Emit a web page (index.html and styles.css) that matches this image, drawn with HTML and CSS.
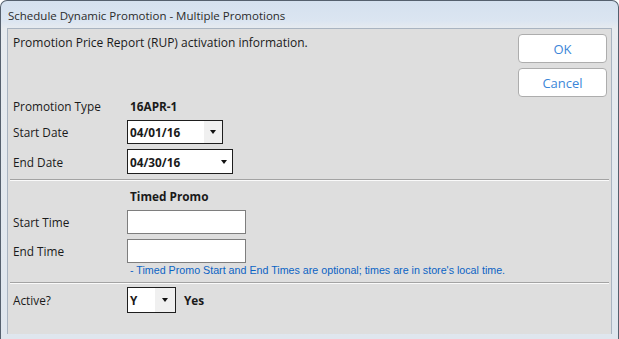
FILE: index.html
```html
<!DOCTYPE html>
<html>
<head>
<meta charset="utf-8">
<link rel="stylesheet" href="styles.css">
</head>
<body>
<div class="window">
  <div class="titlebar">Schedule Dynamic Promotion - Multiple Promotions</div>
  <div class="client">
    <div class="top">
      <div class="form-top">
        <div class="intro">Promotion Price Report (RUP) activation information.</div>
        <div class="row row-type">
          <span class="label">Promotion Type</span>
          <span class="value bold">16APR-1</span>
        </div>
        <div class="row row-start">
          <span class="label">Start Date</span>
          <div class="select sel-start"><span class="sel-text">04/01/16</span><span class="sel-btn"><span class="arrow"></span></span></div>
        </div>
        <div class="row row-end">
          <span class="label">End Date</span>
          <div class="select sel-end"><span class="sel-text">04/30/16</span><span class="sel-btn plain"><span class="arrow"></span></span></div>
        </div>
      </div>
      <div class="buttons">
        <button class="btn">OK</button>
        <button class="btn">Cancel</button>
      </div>
    </div>
    <div class="sep"></div>
    <div class="timed">
      <div class="row row-head">
        <span class="label"></span>
        <span class="value bold">Timed Promo</span>
      </div>
      <div class="row row-time1">
        <span class="label">Start Time</span>
        <div class="input"></div>
      </div>
      <div class="row row-time2">
        <span class="label">End Time</span>
        <div class="input"></div>
      </div>
      <div class="note">- Timed Promo Start and End Times are optional; times are in store's local time.</div>
    </div>
    <div class="sep sep2"></div>
    <div class="row row-active">
      <span class="label">Active?</span>
      <div class="select sel-active"><span class="sel-text">Y</span><span class="sel-btn"><span class="arrow"></span></span></div>
      <span class="yes bold">Yes</span>
    </div>
  </div>
</div>
</body>
</html>
```

FILE: styles.css
```css
html, body {
  margin: 0;
  padding: 0;
  background: #ffffff;
}
body {
  width: 619px;
  height: 339px;
  overflow: hidden;
  font-family: "Open Sans", "Noto Sans", sans-serif;
  font-size: 11.8px;
  color: #1a1a1a;
}
.window {
  box-sizing: border-box;
  width: 619px;
  height: 339px;
  border: 1px solid #55606e;
  border-bottom: none;
  border-radius: 7px 7px 0 0;
  background: linear-gradient(to bottom, #d5e1ef 0px, #dbe5f1 20px, #e7ebef 28px, #dfe6ee 100%);
  padding: 0 6px 5px 6px;
  display: flex;
  flex-direction: column;
}
.titlebar {
  height: 27px;
  line-height: 30px;
  padding-left: 1px;
  font-size: 11.5px;
  color: #2b2b2b;
  flex: none;
}
.client {
  flex: 1;
  background: #dedede;
  border: 1px solid #a9b4c1;
  border-bottom: none;
  padding: 0 0 0 5px;
  display: flex;
  flex-direction: column;
}
.top {
  display: flex;
  justify-content: space-between;
  height: 150px;
}
.form-top {
  display: flex;
  flex-direction: column;
}
.intro {
  margin-top: 5px;
  height: 18px;
  line-height: 18px;
  font-size: 12px;
}
.row {
  display: flex;
  align-items: center;
}
.label {
  width: 114px;
  flex: none;
}
.bold {
  font-weight: 700;
}
.value {
  padding-left: 3px;
}
.row-type {
  margin-top: 45px;
  height: 18px;
}
.row-start {
  margin-top: 5px;
  height: 24px;
}
.row-end {
  margin-top: 5px;
  height: 25px;
}
.select {
  box-sizing: border-box;
  height: 100%;
  border: 1px solid #1e1e1e;
  background: #ffffff;
  display: flex;
  align-items: center;
  font-weight: 700;
}
.sel-text {
  flex: 1;
  padding-left: 2px;
}
.sel-btn {
  height: 100%;
  width: 18px;
  background: #f0f0f0;
  display: flex;
  align-items: center;
  justify-content: center;
}
.sel-btn.plain {
  background: #ffffff;
}
.arrow {
  width: 0;
  height: 0;
  border-left: 3.5px solid transparent;
  border-right: 3.5px solid transparent;
  border-top: 4px solid #111;
}
.sel-start { width: 96px; }
.sel-end { width: 106px; }
.sel-end .sel-btn { width: 16px; }
.buttons {
  display: flex;
  flex-direction: column;
  gap: 5px;
  padding-top: 5px;
  padding-right: 4px;
}
.btn {
  box-sizing: border-box;
  width: 89px;
  height: 29px;
  background: #ffffff;
  border: 1px solid #adadad;
  border-radius: 4px;
  font-family: "Open Sans", "Noto Sans", sans-serif;
  font-size: 13px;
  color: #3b86d8;
  padding: 0;
}
.sep {
  margin: 0 2px 0 -3px;
  height: 0;
  border-top: 1px solid #a3a3a3;
  border-bottom: 1px solid #fafafa;
}
.timed {
  display: flex;
  flex-direction: column;
  height: 101px;
}
.row-head {
  margin-top: 6px;
  height: 18px;
}
.row-time1 {
  margin-top: 5px;
  height: 24px;
}
.row-time2 {
  margin-top: 5px;
  height: 24px;
}
.input {
  box-sizing: border-box;
  width: 119px;
  height: 100%;
  background: #ffffff;
  border: 1px solid #7e7e7e;
}
.note {
  padding-left: 117px;
  height: 12px;
  line-height: 12px;
  font-family: "Liberation Sans", Arial, sans-serif;
  font-size: 10.7px;
  color: #0b63c4;
  margin-top: 1px;
}
.row-active {
  margin-top: 3px;
  height: 26px;
}
.sel-active { width: 49px; }
.sel-active .sel-btn { width: 20px; }
.yes {
  padding-left: 8px;
}
```
